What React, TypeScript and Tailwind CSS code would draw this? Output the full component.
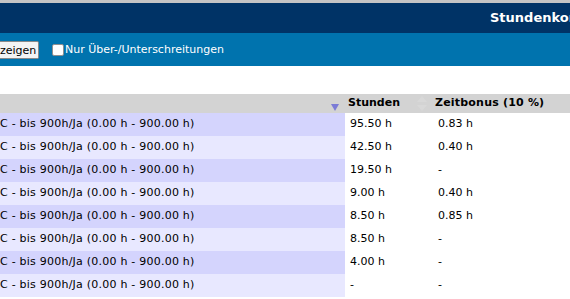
import React from 'react';

const rows = [
    { hours: '95.50 h', bonus: '0.83 h' },
    { hours: '42.50 h', bonus: '0.40 h' },
    { hours: '19.50 h', bonus: '-' },
    { hours: '9.00 h', bonus: '0.40 h' },
    { hours: '8.50 h', bonus: '0.85 h' },
    { hours: '8.50 h', bonus: '-' },
    { hours: '4.00 h', bonus: '-' },
    { hours: '-', bonus: '-' },
];

const SortDown: React.FC = () => (
    <svg width="8" height="7" viewBox="0 0 8 7" className="block">
        <polygon points="0,0 8,0 4,7" fill="#7b7bd6" />
    </svg>
);

const SortBoth: React.FC = () => (
    <svg width="10" height="15" viewBox="0 0 10 15" className="block">
        <polygon points="5,0 10,6 0,6" fill="#d8d8d8" />
        <polygon points="0,9 10,9 5,15" fill="#d8d8d8" />
    </svg>
);

const App: React.FC = () => {
    return (
        <div className="w-[570px] h-[299px] overflow-hidden bg-white text-[11px] text-black font-['DejaVu_Sans',Verdana,sans-serif]">
            <div className="h-[3px] bg-[#c4c4c4]" />
            <div className="h-[30px] bg-[#003366] flex items-center pl-[490px] whitespace-nowrap overflow-hidden">
                <span className="text-white font-bold text-[13px]">Stundenkonten</span>
            </div>
            <div className="h-[33px] bg-[#0073ae] flex items-center gap-[13px] whitespace-nowrap">
                <button className="w-[39px] h-[18px] bg-[#f4f4f4] border border-l-0 border-[#8a8a8a] rounded-r-[2px] text-left pl-0 text-[11px] text-black leading-none mt-[1px]">
                    zeigen
                </button>
                <label className="flex items-center text-white mt-[1px]">
                    <span className="w-[12px] h-[12px] bg-white border border-[#8f8f8f] rounded-[2px] mr-[1px]" />
                    Nur Über-/Unterschreitungen
                </label>
            </div>
            <div className="h-[28px]" />
            <div className="grid grid-cols-[345px_87px_1fr] h-[19px] bg-[#d3d3d3] font-bold">
                <div className="flex items-end justify-end pr-[6px] pb-[2px]">
                    <SortDown />
                </div>
                <div className="flex items-center justify-between pl-[3px] pr-[5px]">
                    <span>Stunden</span>
                    <SortBoth />
                </div>
                <div className="flex items-center pl-[3px] tracking-[0.2px]">Zeitbonus (10 %)</div>
            </div>
            {rows.map((r, i) => (
                <div key={i} className="grid grid-cols-[345px_87px_1fr] h-[23px]">
                    <div
                        className={`flex items-center whitespace-nowrap tracking-[0.23px] ${
                            i % 2 === 0 ? 'bg-[#d4d4fd]' : 'bg-[#e8e8ff]'
                        }`}
                    >
                        C - bis 900h/Ja (0.00 h - 900.00 h)
                    </div>
                    <div className="flex items-center pl-[5px]">{r.hours}</div>
                    <div className="flex items-center pl-[6px]">{r.bonus}</div>
                </div>
            ))}
        </div>
    );
};

export default App;
